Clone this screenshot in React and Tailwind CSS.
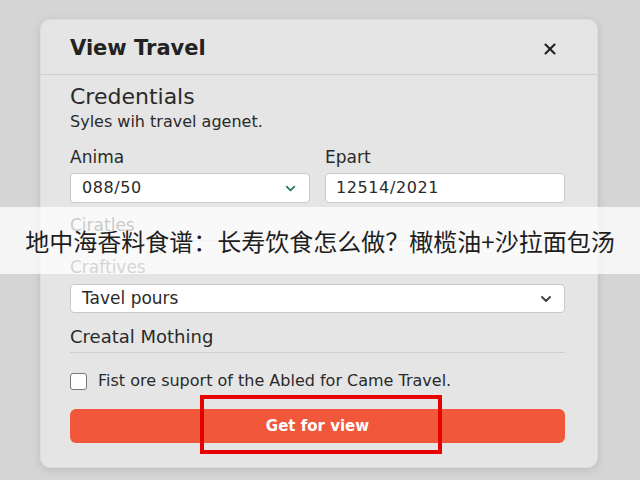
import React from 'react';
import { X, ChevronDown } from 'lucide-react';

const font = { fontFamily: '"DejaVu Sans", "Noto Sans", Arial, sans-serif' };

const App = () => {
  return (
    <div className="relative w-[640px] h-[480px] overflow-hidden bg-[#d5d5d5] pt-[19px] pl-[40px]" style={font}>
      {/* Modal card */}
      <div className="w-[558px] h-[449px] rounded-[10px] bg-[#e5e5e5] shadow-[0_2px_8px_rgba(0,0,0,0.12)] border border-[#dcdcdc]">
        <div className="h-[55px] flex items-center justify-between pt-[3px] pl-[29px] pr-[38px] border-b border-[#cfcfcf]">
          <h1 className="text-[21px] font-bold text-[#222]">View Travel</h1>
          <X size={18} strokeWidth={2.8} className="text-[#222]" />
        </div>

        <div className="pl-[29px] pr-[32px] text-[#2a2a2a]">
          <h2 className="mt-[9px] text-[22px] leading-[26px]">Credentials</h2>
          <p className="mt-[2px] text-[16px] leading-[20px]">Syles wih travel agenet.</p>

          <div className="mt-[15px] grid grid-cols-2 gap-[15px]">
            <div>
              <label className="block text-[17px] leading-[20px]">Anima</label>
              <div className="mt-[6px] h-[30px] flex items-center justify-between px-[11px] bg-white border border-[#c9c9c9] rounded-[4px]">
                <span className="text-[16px] tracking-[0.6px]">088/50</span>
                <ChevronDown size={15} strokeWidth={3} className="text-[#2c7b6b]" />
              </div>
            </div>
            <div>
              <label className="block text-[17px] leading-[20px]">Epart</label>
              <div className="mt-[6px] h-[30px] flex items-center px-[10px] bg-white border border-[#c9c9c9] rounded-[4px]">
                <span className="text-[16px] tracking-[0.6px]">12514/2021</span>
              </div>
            </div>
          </div>

          <div className="mt-[12px] pb-[5px] border-b border-[#cfcfcf]">
            <span className="block text-[17px] leading-[20px]">Ciratles</span>
          </div>

          <label className="mt-[16px] block text-[17px] leading-[20px] text-[#555]">Craftives</label>
          <div className="mt-[7px] h-[29px] flex items-center justify-between pl-[11px] pr-[10px] bg-white border border-[#c9c9c9] rounded-[4px]">
            <span className="text-[17px]">Tavel pours</span>
            <ChevronDown size={16} strokeWidth={3} className="text-[#444]" />
          </div>

          <div className="mt-[14px] pb-[5px] border-b border-[#cfcfcf]">
            <span className="block text-[18px] leading-[20px]">Creatal Mothing</span>
          </div>

          <div className="mt-[18px] h-[20px] flex items-center gap-[11px]">
            <span className="w-[17px] h-[17px] rounded-[3px] border-[1.5px] border-[#777] bg-white" />
            <span className="text-[16px]">Fist ore suport of the Abled for Came Travel.</span>
          </div>

          <button className="mt-[18px] w-full h-[34px] rounded-[6px] bg-[#f1583b] text-white text-[15px] font-semibold">
            Get for view
          </button>
        </div>
      </div>

      {/* Caption band */}
      <div className="absolute left-0 top-[207px] w-[640px] h-[67px] bg-white/75 flex items-center justify-center">
        <span className="text-[24px] text-[#1e1e1e]" style={{ fontFamily: '"Noto Sans CJK SC", sans-serif' }}>
          地中海香料食谱：长寿饮食怎么做？橄榄油+沙拉面包汤
        </span>
      </div>

      {/* Highlight frame */}
      <div className="absolute left-[200px] top-[395px] w-[242px] h-[59px] border-4 border-[#e60000]" />
    </div>
  );
};

export default App;
